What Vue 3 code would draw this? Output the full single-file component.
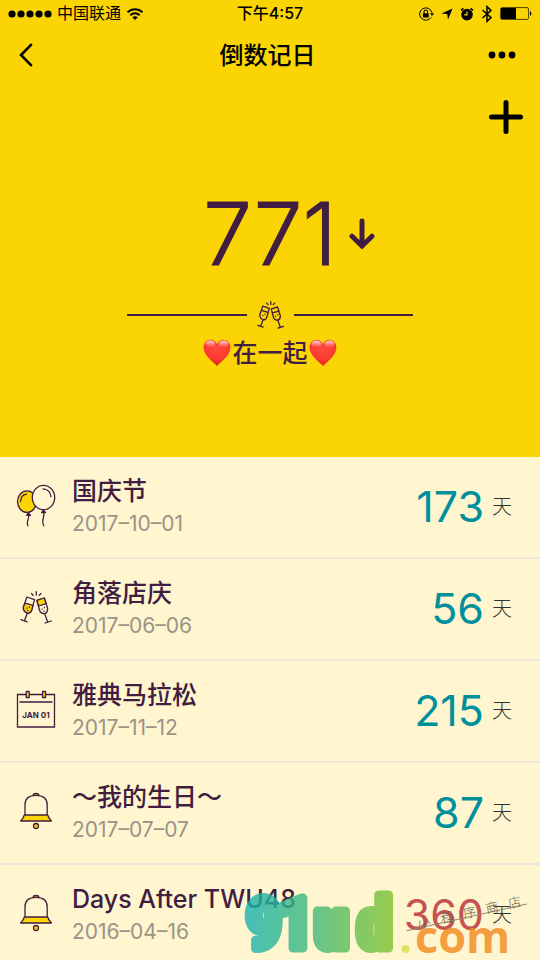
<script setup>
import { ref } from 'vue'

const hero = { days: 771, title: '在一起' }

const events = ref([
  { id: 1, icon: 'balloon', name: '国庆节', date: '2017–10–01', days: 173, past: false },
  { id: 2, icon: 'glasses', name: '角落店庆', date: '2017–06–06', days: 56, past: false },
  { id: 3, icon: 'calendar', name: '雅典马拉松', date: '2017–11–12', days: 215, past: false },
  { id: 4, icon: 'bell', name: '～我的生日～', date: '2017–07–07', days: 87, past: false },
  { id: 5, icon: 'bell', name: 'Days After TWU48', date: '2016–04–16', days: 360, past: true }
])
</script>

<template>
  <div class="app">
    <div class="status">
      <div class="status-left">
        <svg class="signal" viewBox="0 0 44 8" aria-hidden="true">
          <circle v-for="n in 5" :key="n" :cx="n * 9 - 5" cy="4" r="3.6" />
        </svg>
        <span>中国联通</span>
        <svg class="wifi" viewBox="0 0 18 14" aria-hidden="true">
          <path d="M1.5 5.2C5.8 1.1 12.2 1.1 16.5 5.2M4.3 8.2C7 5.6 11 5.6 13.7 8.2" fill="none" stroke="#000" stroke-width="2" />
          <path d="M6.3 10.2C7.9 8.9 10.1 8.9 11.7 10.2L9 13Z" />
        </svg>
      </div>
      <time class="clock">下午4:57</time>
      <div class="status-right">
        <svg class="lock" viewBox="0 0 16 16" aria-hidden="true">
          <path d="M13.2 11.2A6.2 6.2 0 1 1 13.9 6.6" fill="none" stroke="#000" stroke-width="1" />
          <path d="M11.9 7.2H16L14 10Z" />
          <rect x="4.9" y="7.2" width="5.8" height="4.3" rx=".5" />
          <path d="M6 7.4V5.8a1.8 1.8 0 0 1 3.6 0V7.4" fill="none" stroke="#000" stroke-width="1.1" />
        </svg>
        <svg class="locate" viewBox="0 0 12 12" aria-hidden="true"><path d="M11.6.6L7 11.6 6.2 6.1.5 5.4Z" /></svg>
        <svg class="alarm" viewBox="0 0 14 14" aria-hidden="true">
          <circle cx="7" cy="7.6" r="5.8" />
          <path d="M1 3.4L3.4 1.4M13 3.4L10.6 1.4" stroke="#000" stroke-width="1.6" />
          <path d="M7 4.4V7.9H4.2" fill="none" stroke="#fbd404" stroke-width="1.2" />
        </svg>
        <svg class="bluetooth" viewBox="0 0 12 18" aria-hidden="true">
          <path d="M1.5 5L10 12.6 6 16.4V1.6L10 5.4 1.5 13" fill="none" stroke="#000" stroke-width="1.5" />
        </svg>
        <svg class="battery" viewBox="0 0 32 13" aria-hidden="true">
          <rect x=".6" y=".6" width="28" height="11.8" rx="1.6" fill="none" stroke="#000" stroke-width=".7" />
          <rect x="1" y="1" width="15" height="11" />
          <path d="M30 4.2c1.8.6 1.8 4 0 4.6Z" />
        </svg>
      </div>
    </div>

    <header class="nav">
      <button class="icon-button back" type="button" aria-label="返回">
        <svg viewBox="0 0 14 24"><path d="M12 1.8L2 12L12 22.2" fill="none" stroke="#000" stroke-width="2.6" stroke-linecap="round" /></svg>
      </button>
      <h1>倒数记日</h1>
      <button class="icon-button more" type="button" aria-label="更多">
        <svg viewBox="0 0 28 8"><circle cx="4" cy="4" r="3.4" /><circle cx="14" cy="4" r="3.4" /><circle cx="24" cy="4" r="3.4" /></svg>
      </button>
    </header>

    <section class="hero">
      <button class="icon-button add" type="button" aria-label="添加">
        <svg viewBox="0 0 34 34"><path d="M17 2.5V31.5M2.5 17H31.5" stroke="#000" stroke-width="5" stroke-linecap="round" /></svg>
      </button>
      <div class="count">
        <strong>{{ hero.days }}</strong>
        <svg class="arrow" viewBox="0 0 26 32" aria-hidden="true">
          <path d="M13 3V28M3 18.2L13 28L23 18.2" fill="none" stroke="#421d42" stroke-width="5" stroke-linecap="round" />
        </svg>
      </div>
      <div class="divider">
        <svg class="toast" viewBox="4 5 32 33" aria-hidden="true">
          <g fill="none" stroke="#421d42" stroke-width="1.6" stroke-linecap="round" stroke-linejoin="round">
            <path d="M10.9 11L18.5 13.6L15.7 24Q14.4 27.8 11.3 27Q6.9 25.4 7.4 21Z" />
            <path d="M9.4 16L17 18.3M11.3 27L8.5 34.7M5 33.7L11.2 35.8" />
            <path d="M20.9 14.3L28.3 12L31.6 22.3Q31.9 26.6 28.7 27.6Q25 28 23.6 24.5Z" />
            <path d="M22.3 19L29.9 16.8M28.7 27.6L31.7 36.3M29 37L35.3 35" />
            <path d="M15.4 7.4L17 9.2M20.3 5.7V9M25 7.4L23.3 9.2M11 22V22.2M13.5 20.5V20.7M26 23V23.2M28.5 21V21.2" />
          </g>
        </svg>
      </div>
      <p class="hero-title">
        <svg v-for="n in 2" :key="n" :class="['heart', n === 1 ? 'first' : 'last']" viewBox="0 0 28 28" aria-hidden="true">
          <defs>
            <radialGradient :id="'heart' + n" cx=".5" cy=".3" r=".75">
              <stop offset="0" stop-color="#ff4a3c" /><stop offset=".6" stop-color="#fb3a31" /><stop offset="1" stop-color="#d51b18" />
            </radialGradient>
            <linearGradient :id="'shine' + n" x1="0" y1="0" x2="0" y2="1">
              <stop offset="0" stop-color="#fff" stop-opacity=".75" /><stop offset="1" stop-color="#fff" stop-opacity="0" />
            </linearGradient>
          </defs>
          <path :fill="'url(#heart' + n + ')'" d="M14 27C10 22.8 1 17 .6 8.8C.5 4 3.6 .8 7.4 .8C10.5 .8 12.8 2.6 14 5C15.2 2.6 17.5 .8 20.6 .8C24.4 .8 27.5 4 27.4 8.8C27 17 18 22.8 14 27Z" />
          <ellipse :fill="'url(#shine' + n + ')'" cx="7.3" cy="5" rx="4.8" ry="3.4" />
          <ellipse :fill="'url(#shine' + n + ')'" cx="20.7" cy="5" rx="4.8" ry="3.4" />
        </svg>
        <span>{{ hero.title }}</span>
      </p>
    </section>

    <ul class="events">
      <li v-for="event in events" :key="event.id" class="event">
        <svg class="event-icon" viewBox="0 0 40 44" aria-hidden="true">
          <g stroke="#421d42" stroke-width="1.3" stroke-linecap="round" stroke-linejoin="round" fill="none">
            <template v-if="event.icon === 'balloon'">
              <ellipse fill="#fbd404" cx="11" cy="17.6" rx="9.5" ry="10.8" />
              <ellipse fill="#fff5cf" cx="27.5" cy="13.5" rx="11.2" ry="12.2" />
              <path d="M4.6 17.5C4.7 13.5 7 10.6 10.5 10.1M27 4.8C31.5 5 34.8 8.2 35 12.7" />
              <path d="M12.3 29L10.6 31.3H14.5ZM27.2 26L25.6 28.5H29.5Z" fill="#421d42" />
              <path d="M12.5 31.5C14 35 9.5 37.5 11.8 41.7M27.6 28.5C29.2 33 24.5 36.5 27.8 41.7" />
            </template>
            <template v-else-if="event.icon === 'glasses'">
              <path fill="#fff5cf" d="M10.9 11L18.5 13.6L15.7 24Q14.4 27.8 11.3 27Q6.9 25.4 7.4 21Z" />
              <path fill="#fbd404" d="M9.2 17.2L17 19.3L15.7 24Q14.4 27.8 11.3 27Q6.9 25.4 7.4 21Z" />
              <path d="M11.3 27L8.5 34.7M5 33.7L11.2 35.8" />
              <path fill="#fff5cf" d="M20.9 14.3L28.3 12L31.6 22.3Q31.9 26.6 28.7 27.6Q25 28 23.6 24.5Z" />
              <path fill="#fbd404" d="M20.9 14.3L28.3 12L30 17.7L22.7 20Z" />
              <path d="M28.7 27.6L31.7 36.3M29 37L35.3 35" />
              <path d="M15.4 7.4L17 9.2M20.3 5.7V9M25 7.4L23.3 9.2M11 22V22.2M13.5 21V21.2M12 24.5V24.7M26 23V23.2M28.5 21.5V21.7M28 25V25.2" />
            </template>
            <template v-else-if="event.icon === 'calendar'">
              <path stroke-linejoin="miter" d="M1.5 6.5H38.5V39H1.5ZM4 14H36" />
              <path fill="#fbd404" d="M10.2 3.5H13.2V9.5H10.2ZM26.6 3.5H29.6V9.5H26.6Z" />
              <text class="cal-text" x="20" y="30" text-anchor="middle">JAN 01</text>
            </template>
            <template v-else>
              <path d="M17.2 5.3C17.4 2.9 22.6 2.9 22.8 5.3" fill="#fbd404" />
              <path d="M9 25V15C9 8.7 13 5.4 20 5.4C27 5.4 31.2 8.7 31.2 15V25" />
              <path fill="#fbd404" d="M8.3 25H31.7C32.5 28 34 29.5 35.4 31H4.6C6.2 29.5 7.7 28 8.3 25Z" />
              <circle fill="#fbd404" cx="20" cy="36" r="2.5" />
            </template>
          </g>
        </svg>
        <div class="event-body">
          <h2>{{ event.name }}</h2>
          <time>{{ event.date }}</time>
        </div>
        <div class="event-count" :class="{ past: event.past }">
          <strong>{{ event.days }}</strong>
          <span>天</span>
        </div>
      </li>
    </ul>

    <svg class="watermark" viewBox="0 0 300 76" aria-hidden="true">
      <defs>
        <linearGradient id="brand" gradientUnits="userSpaceOnUse" x1="8" y1="0" x2="158" y2="0">
          <stop offset="0" stop-color="#16b3b3" /><stop offset=".45" stop-color="#3fb97b" /><stop offset="1" stop-color="#7fc22f" />
        </linearGradient>
      </defs>
      <g opacity=".8">
        <g class="brand-name" fill="url(#brand)" stroke="url(#brand)" stroke-width="9" stroke-linejoin="round">
          <text x="11" y="64">9</text>
          <text x="43" y="64">1</text>
          <text x="79" y="64">u</text>
          <text x="122" y="64">d</text>
        </g>
        <circle cx="170.5" cy="65" r="4" fill="#d3e140" />
        <text class="brand-com" x="180" y="69">com</text>
      </g>
      <g transform="rotate(-12.5 231 33)">
        <path d="M170 33.5H293" stroke="#8d8a70" stroke-width="1" />
        <text class="store" x="182 206 229 252 275" y="34">小程序商店</text>
      </g>
    </svg>
  </div>
</template>

<style>
body {
  background: #fff5cf;
}
</style>

<style scoped>
.app {
  position: relative;
  height: 100vh;
  overflow: hidden;
  background: #fff5cf;
  color: #421d42;
  font-family: Inter, "Noto Sans CJK SC", sans-serif;
}

.app * {
  box-sizing: border-box;
}

h1, h2, p, ul {
  margin: 0;
  padding: 0;
}

svg {
  display: block;
  flex: none;
}

.status {
  display: grid;
  grid-template-columns: 1fr auto 1fr;
  align-items: center;
  height: 27px;
  padding: 0 8px;
  background: #fbd404;
  color: #000;
  font-size: 16px;
  line-height: 27px;
}

.status-left,
.status-right {
  display: flex;
  align-items: center;
  gap: 5px;
}

.status-right {
  justify-content: flex-end;
  gap: 7px;
}

.signal { width: 44px; height: 8px; }
.wifi { width: 18px; height: 14px; }
.lock { width: 16px; height: 16px; }
.locate { width: 12px; height: 12px; }
.alarm { width: 14px; height: 14px; }
.bluetooth { width: 12px; height: 18px; }
.battery { width: 32px; height: 13px; }

.clock {
  font-weight: 500;
}

.nav {
  display: grid;
  grid-template-columns: 1fr auto 1fr;
  align-items: center;
  height: 56px;
  padding: 0 24px 0 19px;
  background: #fbd404;
  color: #000;
}

h1 {
  padding-top: 2px;
  font-size: 24px;
  font-weight: 500;
  line-height: 32px;
}

.icon-button {
  padding: 0;
  border: 0;
  background: none;
  cursor: pointer;
}

.back { justify-self: start; }
.back svg { width: 14px; height: 24px; }
.more { justify-self: end; }
.more svg { width: 28px; height: 8px; }

.hero {
  display: flex;
  flex-direction: column;
  align-items: center;
  height: 374px;
  padding-top: 17px;
  background: #fbd404;
}

.add {
  align-self: flex-end;
  margin-right: 17px;
}

.add svg {
  width: 34px;
  height: 34px;
}

.count {
  display: grid;
  grid-template-columns: 1fr auto 1fr;
  align-items: center;
  gap: 12px;
  width: 100%;
  margin-top: 52px;
}

.count strong {
  grid-column: 2;
  font-size: 87px;
  font-weight: 300;
  line-height: 96px;
  -webkit-text-stroke: 1px #421d42;
}

.arrow {
  width: 26px;
  height: 32px;
}

.divider {
  display: flex;
  align-items: center;
  gap: 10px;
  width: 53%;
  margin-top: 19px;
}

.divider::before,
.divider::after {
  content: "";
  flex: 1;
  height: 2px;
  background: #421d42;
}

.toast {
  width: 27px;
  height: 28px;
}

.hero-title {
  display: flex;
  align-items: center;
  gap: 1px;
  margin-top: 8px;
  font-size: 25px;
  font-weight: 500;
  line-height: 32px;
}

.heart {
  width: 28px;
  height: 28px;
}

.heart.last {
  order: 1;
}

.events {
  list-style: none;
}

.event {
  display: flex;
  align-items: center;
  gap: 16px;
  height: 102px;
  padding: 0 28px 2px 16px;
  border-bottom: 2px solid #ebe7dc;
}

.event-icon {
  width: 40px;
  height: 44px;
}

.cal-text {
  fill: #421d42;
  stroke: none;
  font-size: 8px;
  font-weight: 700;
}

.event-body {
  flex: 1;
}

h2 {
  font-size: 25px;
  font-weight: 500;
  line-height: 36px;
}

.event-body time {
  display: block;
  color: #999488;
  font-size: 21px;
  font-weight: 400;
  line-height: 30px;
}

.event-count {
  display: flex;
  align-items: center;
  gap: 8px;
}

.event-count strong {
  color: #008f9d;
  font-size: 43px;
  font-weight: 400;
  line-height: 52px;
}

.event-count.past strong {
  color: #c65252;
}

.event-count span {
  padding-top: 2px;
  color: #333;
  font-size: 20px;
  font-weight: 200;
  line-height: 28px;
}

.watermark {
  position: absolute;
  right: 5px;
  bottom: 0;
  width: 300px;
  height: 76px;
}

.brand-name {
  font-family: "Liberation Sans Narrow", "Roboto Condensed", "Open Sans Condensed", Roboto, sans-serif;
  font-size: 71px;
  font-weight: 700;
}

.brand-com {
  fill: #f28a1c;
  font-family: "Open Sans", sans-serif;
  font-size: 45px;
  font-weight: 700;
}

.store {
  fill: #5f5c4c;
  font-size: 13px;
  font-weight: 300;
}
</style>
